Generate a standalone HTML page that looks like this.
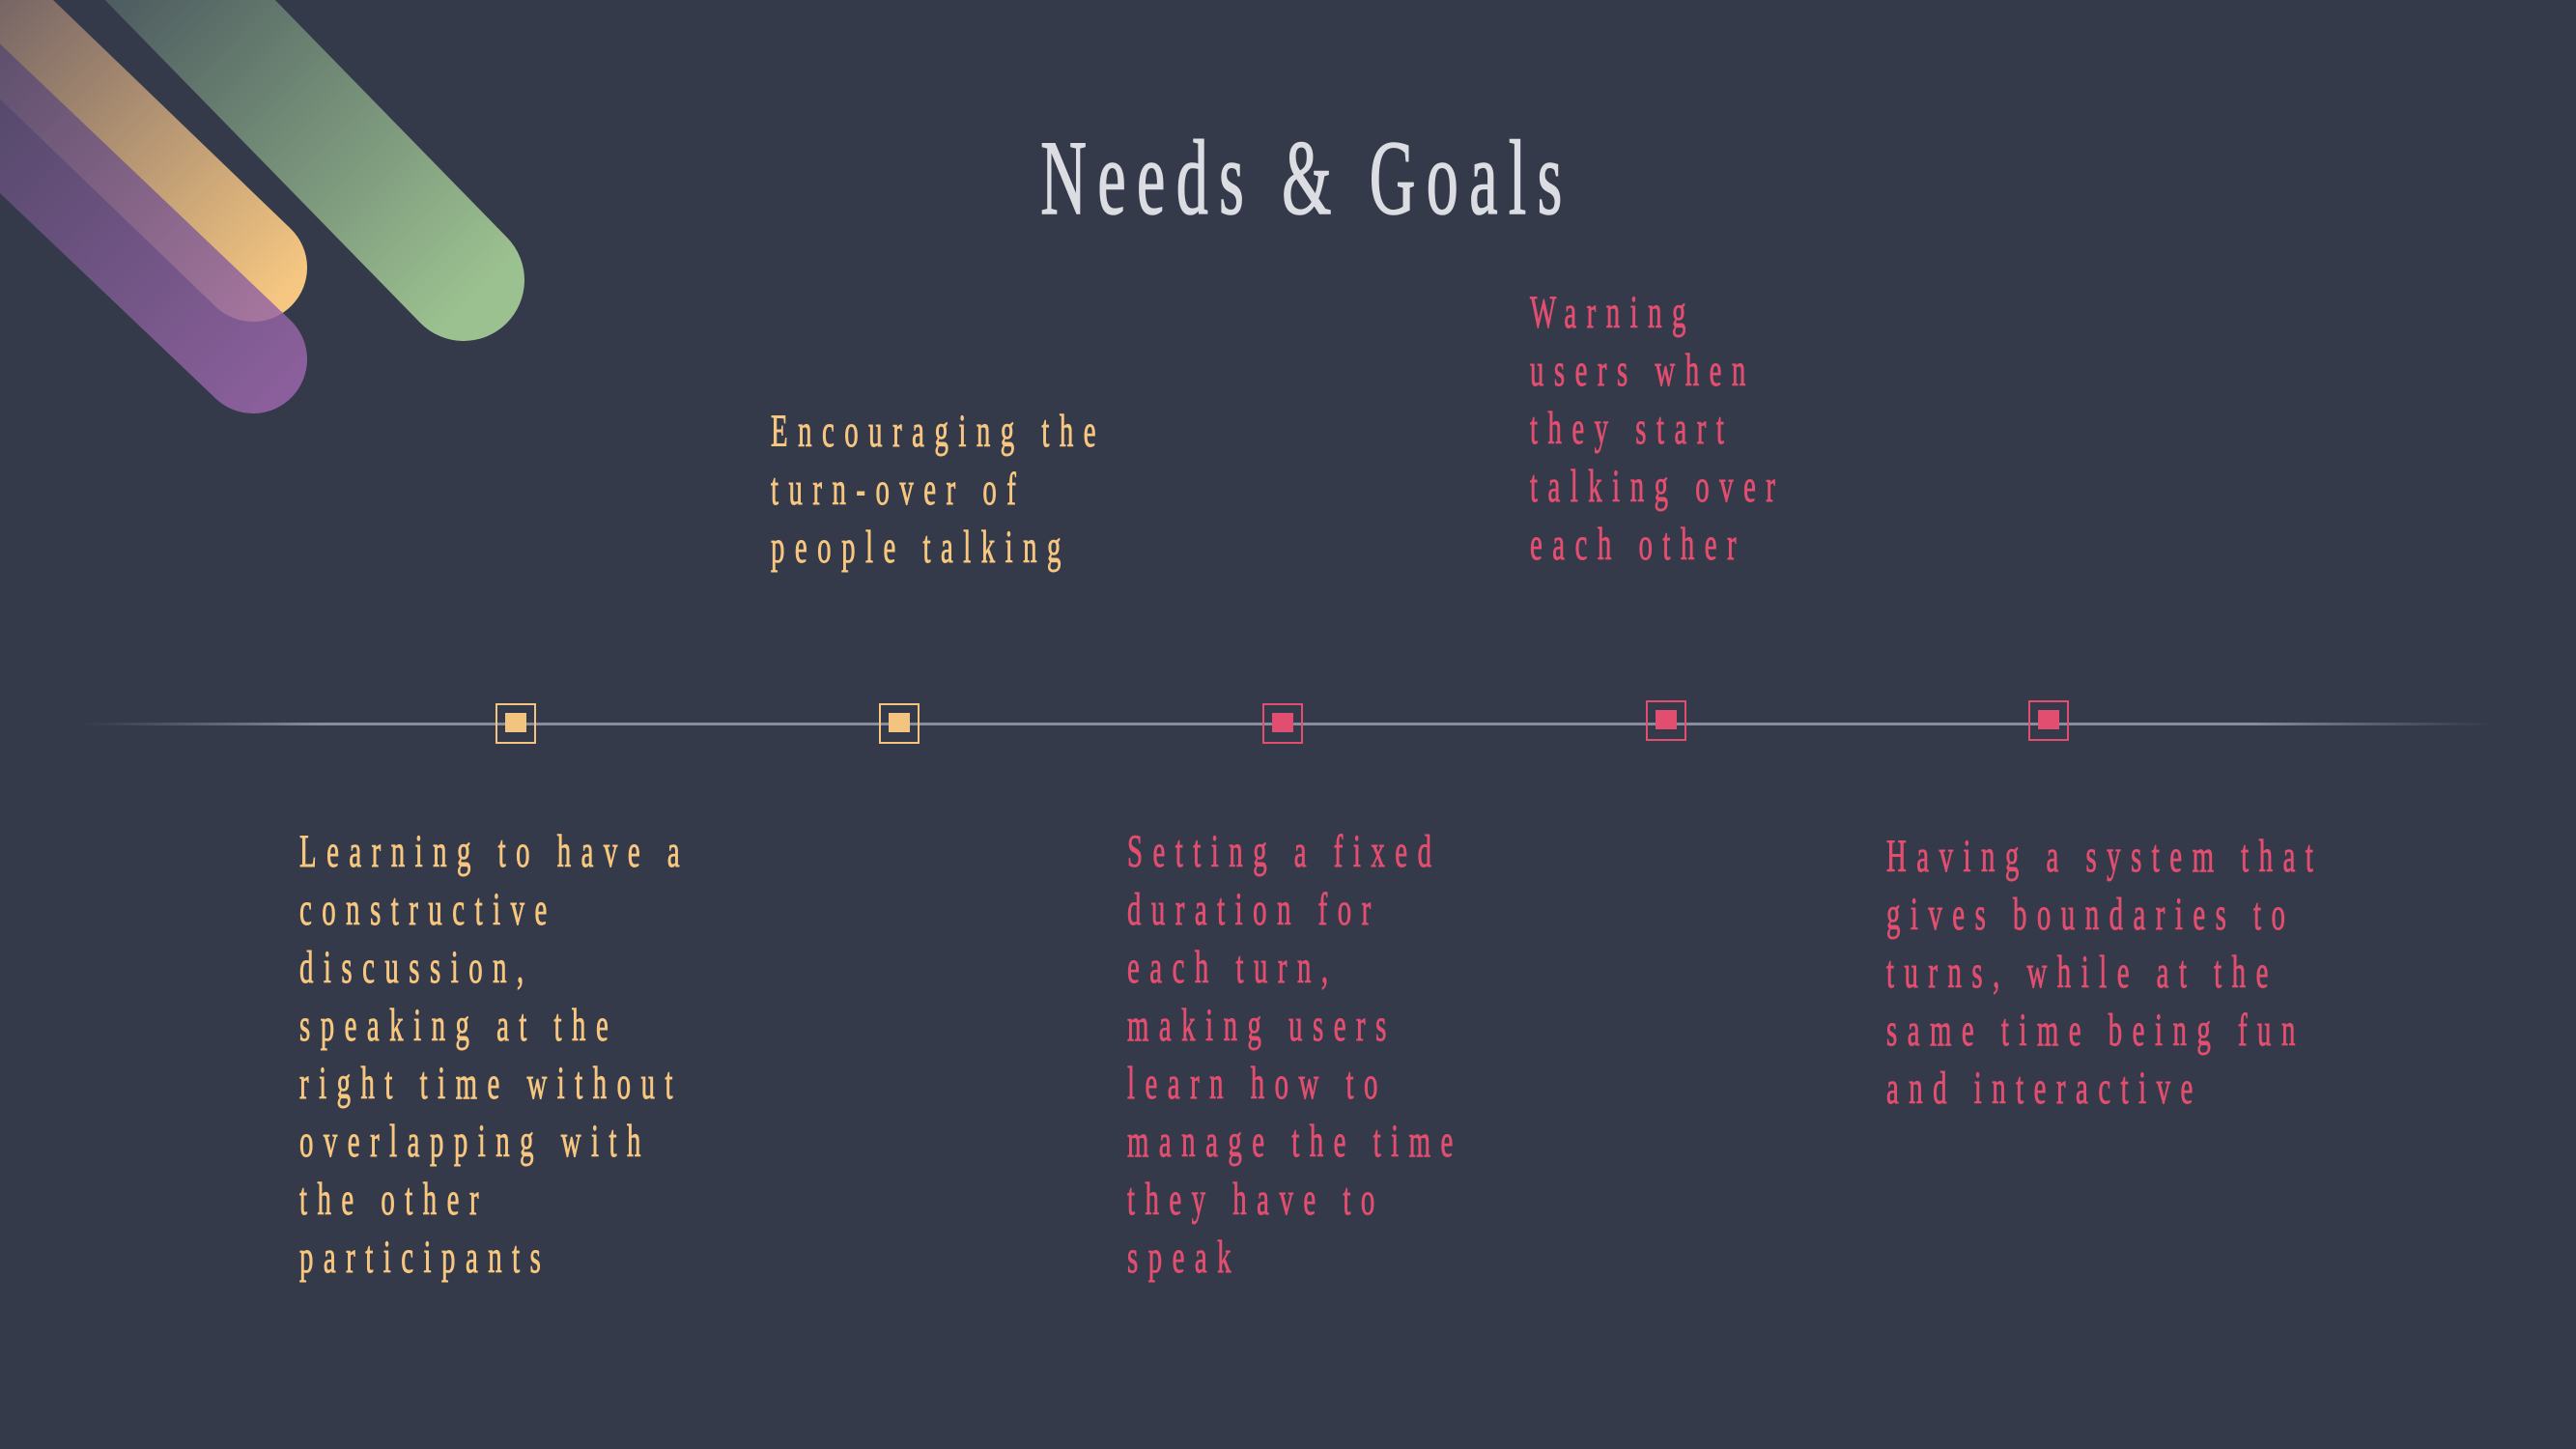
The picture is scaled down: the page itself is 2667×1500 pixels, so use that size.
<!DOCTYPE html>
<html><head><meta charset="utf-8"><style>
html,body{margin:0;padding:0}
body{width:2667px;height:1500px;background:#353a4b;position:relative;overflow:hidden;font-family:"Liberation Serif",serif}
.t{position:absolute;font-size:48px;line-height:60px;letter-spacing:17.5px;transform:scaleX(0.6);transform-origin:0 0;white-space:nowrap;-webkit-text-stroke:0.9px currentColor}
.y{color:#f7c77f}.p{color:#e24e6f}
.title{position:absolute;left:0;width:2706px;top:119px;text-align:center;font-size:110px;line-height:130px;letter-spacing:19px;color:#dcdde3;transform:scaleX(0.6);transform-origin:1353px 0;white-space:nowrap;-webkit-text-stroke:1.5px #dcdde3}
.m{position:absolute;width:42px;height:42px;box-sizing:border-box;border:2px solid}
.m i{position:absolute;left:8px;top:8px;width:22px;height:20px}
</style></head><body>
<svg width="2667" height="1500" style="position:absolute;left:0;top:0">
<defs>
<linearGradient id="g1" gradientUnits="userSpaceOnUse" x1="100" y1="-100" x2="500" y2="300"><stop offset="0" stop-color="#404b58"/><stop offset="1" stop-color="#9cc190"/></linearGradient>
<linearGradient id="g2" gradientUnits="userSpaceOnUse" x1="-60" y1="-60" x2="300" y2="300"><stop offset="0" stop-color="#5d5260"/><stop offset="1" stop-color="#f6c781"/></linearGradient>
<linearGradient id="g3" gradientUnits="userSpaceOnUse" x1="-80" y1="40" x2="290" y2="400"><stop offset="0" stop-color="#4e4666"/><stop offset="1" stop-color="#9d68ad"/></linearGradient>
<linearGradient id="ln" x1="0" x2="1"><stop offset="0" stop-color="#7a7f90" stop-opacity="0"/><stop offset="0.1" stop-color="#8a8e9c"/><stop offset="0.9" stop-color="#8a8e9c"/><stop offset="1" stop-color="#7a7f90" stop-opacity="0"/></linearGradient>
</defs>
<line x1="60" y1="-140" x2="480" y2="290" stroke="url(#g1)" stroke-width="126" stroke-linecap="round"/>
<line x1="-140" y1="-110" x2="262" y2="277" stroke="url(#g2)" stroke-width="112" stroke-linecap="round"/>
<line x1="-150" y1="-20" x2="262" y2="372" stroke="url(#g3)" stroke-width="112" stroke-linecap="round" opacity="0.82"/>
<rect x="85" y="748" width="2495" height="3" fill="url(#ln)"/>
</svg>
<div class="title">Needs &amp; Goals</div>
<div class="m" style="left:513px;top:728px;border-color:#f3c47f"><i style="background:#f3c47f"></i></div>
<div class="m" style="left:910px;top:728px;border-color:#f3c47f"><i style="background:#f3c47f"></i></div>
<div class="m" style="left:1307px;top:728px;border-color:#e24e6f"><i style="background:#e24e6f"></i></div>
<div class="m" style="left:1704px;top:725px;border-color:#e24e6f"><i style="background:#e24e6f"></i></div>
<div class="m" style="left:2100px;top:725px;border-color:#e24e6f"><i style="background:#e24e6f"></i></div>
<div class="t y" style="left:310px;top:852px">Learning to have a<br>constructive<br>discussion,<br>speaking at the<br>right time without<br>overlapping with<br>the other<br>participants</div>
<div class="t y" style="left:798px;top:417px">Encouraging the<br>turn-over of<br>people talking</div>
<div class="t p" style="left:1167px;top:852px">Setting a fixed<br>duration for<br>each turn,<br>making users<br>learn how to<br>manage the time<br>they have to<br>speak</div>
<div class="t p" style="left:1584px;top:294px">Warning<br>users when<br>they start<br>talking over<br>each other</div>
<div class="t p" style="left:1953px;top:857px">Having a system that<br>gives boundaries to<br>turns, while at the<br>same time being fun<br>and interactive</div>
</body></html>
